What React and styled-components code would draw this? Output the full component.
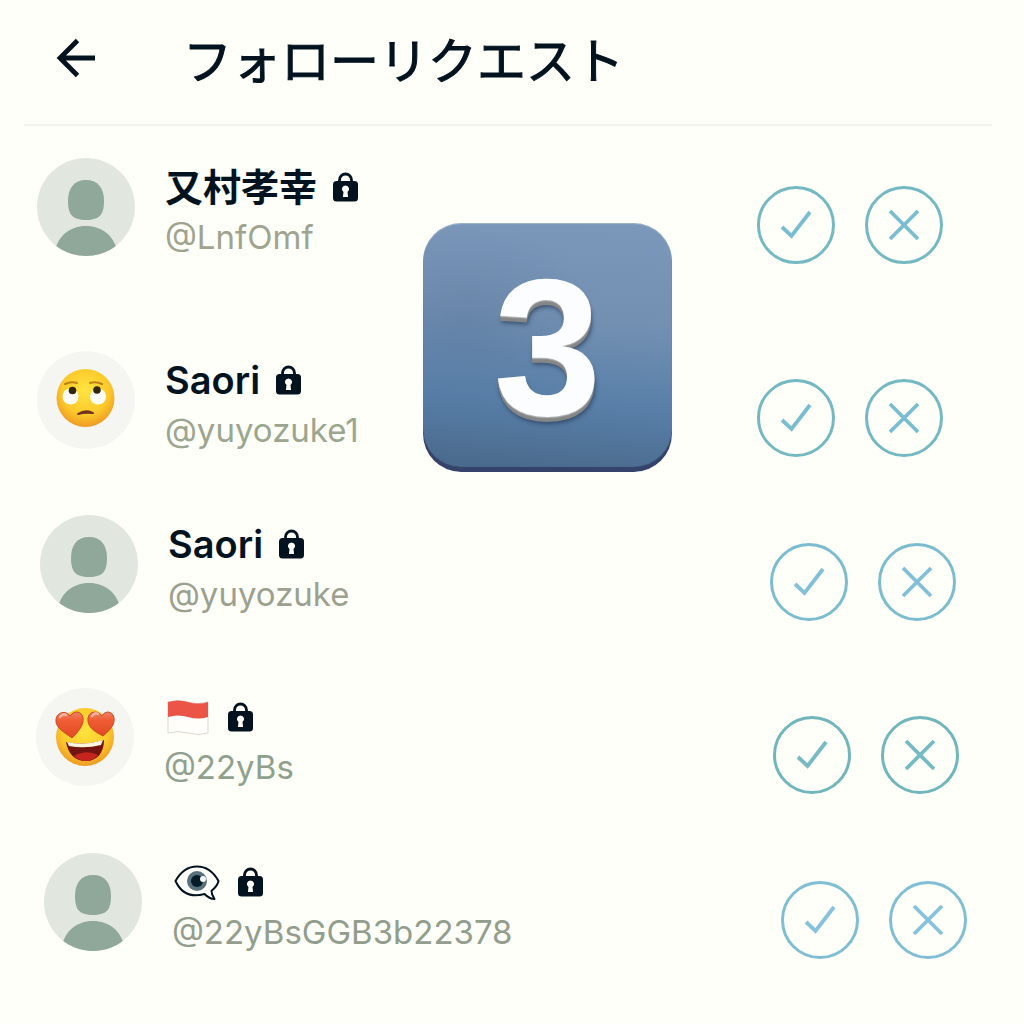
import React from 'react'
import styled, { createGlobalStyle } from 'styled-components'

const GlobalStyle = createGlobalStyle`
  * {
    box-sizing: border-box;
  }

  body {
    margin: 0;
    min-height: 100vh;
    background: #fefff8;
    color: #02131f;
    font-family: "Inter", "Noto Sans CJK JP", sans-serif;
  }
`;

const Page = styled.main`
  position: relative;
`;

const Header = styled.header`
  display: flex;
  align-items: center;
  gap: 83px;
  height: 126px;
  margin: 0 32px 0 24px;
  padding: 0 0 8px 28px;
  border-bottom: 2px solid #f1f3ee;
`;

const BackButton = styled.button`
  display: flex;
  padding: 0;
  border: 0;
  background: none;
  color: inherit;
  cursor: pointer;
`;

const Title = styled.h1`
  margin: 0;
  font-family: "Noto Sans CJK JP", sans-serif;
  font-size: 49px;
  font-weight: 400;
  line-height: 64px;
  -webkit-text-stroke: 1px currentColor;
`;

const List = styled.ul`
  margin: 0;
  padding: 32px 0 0;
  list-style: none;
`;

const Row = styled.li`
  display: flex;
  align-items: flex-start;
  gap: 30px;
  padding: 0 ${props => props.$end}px ${props => props.$space}px ${props => props.$start}px;
`;

const Avatar = styled.svg`
  flex: none;
  width: 98px;
  height: 98px;
  border-radius: 50%;
`;

const Info = styled.div`
  flex: 1;
  min-width: 0;
  padding-top: 7px;
`;

const NameLine = styled.div`
  display: flex;
  align-items: center;
  gap: 16px;
  height: 44px;
`;

const Name = styled.span`
  font-size: 38px;
  font-weight: 600;
  line-height: 44px;
`;

const Emoji = styled.span`
  display: flex;
  padding: 0 2px;
`;

const Handle = styled.a`
  display: block;
  color: ${props => props.$color};
  font-size: 33px;
  line-height: 56px;
  text-decoration: none;
`;

const Actions = styled.div`
  display: flex;
  gap: 30px;
  padding-top: 28px;
`;

const RoundButton = styled.button`
  display: flex;
  align-items: center;
  justify-content: center;
  width: 78px;
  height: 78px;
  padding: 0;
  border: 3px solid ${props => props.$color};
  border-radius: 50%;
  background: none;
  color: ${props => props.$ink};
  cursor: pointer;
`;

const Keycap = styled.div`
  position: absolute;
  top: 223px;
  left: calc(50% - 89px);
  display: flex;
  align-items: center;
  justify-content: center;
  width: 249px;
  height: 249px;
  border-radius: 38px;
  background:
    radial-gradient(ellipse at 18% 40%, rgba(70, 100, 140, 0.22), transparent 45%),
    linear-gradient(185deg, #7b98bb 0%, #7390b2 38%, #587fa8 70%, #4b6b8d 95%);
  box-shadow: inset 0 -5px 1px #35426a, inset 0 1px 1px #a2b5c9;
  color: #fbfdff;
  font-family: "Liberation Sans", sans-serif;
  font-size: 194px;
  font-weight: 700;
  line-height: 249px;
  text-shadow:
    0 1px 0 #b5b5b5,
    0 2px 0 #8f9090,
    0 4px 0 #858686,
    0 5px 0 #858686,
    1px 7px 4px rgba(35, 55, 85, 0.7);
`;

const ArrowIcon = () => (
  <svg width="48" height="48" viewBox="0 0 48 48" fill="none" stroke="currentColor" strokeWidth="4.8">
    <path d="M43 24H8M25.500 6.500L8 24l17.500 17.500" />
  </svg>
)

const LockIcon = () => (
  <svg width="25" height="30" viewBox="0 0 25 30" role="img" aria-label="非公開アカウント">
    <path d="M6.500 12V8a6 6 0 0 1 12 0v4" fill="none" stroke="#02131f" strokeWidth="2.8" />
    <rect y="9" width="25" height="20.500" rx="3.500" fill="#02131f" />
    <path d="M12.500 13.500a3.600 3.600 0 0 1 2 6.600l.6 4.900h-5.200l.6-4.900a3.600 3.600 0 0 1 2-6.600z" fill="#fefff8" />
  </svg>
)

const CheckIcon = () => (
  <svg width="36" height="36" viewBox="0 0 36 36" fill="none" stroke="currentColor" strokeWidth="3.8">
    <path d="M4 20l9.500 9L32 5" />
  </svg>
)

const CloseIcon = () => (
  <svg width="36" height="36" viewBox="0 0 36 36" fill="none" stroke="currentColor" strokeWidth="3.8">
    <path d="M4 4l28 28M32 4L4 32" />
  </svg>
)

const PersonAvatar = () => (
  <Avatar viewBox="0 0 98 98" aria-hidden="true">
    <rect width="98" height="98" fill="#e1e7de" />
    <path d="M49 22c12 0 18 8 18 21 0 13-4 19-18 19s-18-6-18-19c0-13 6-21 18-21z" fill="#8fa899" />
    <path d="M17 98c2-20 16-30 32-30s30 10 32 30z" fill="#8fa899" />
  </Avatar>
)

const FaceGradient = ({ id }) => (
  <radialGradient id={id} cx="50%" cy="38%" r="62%">
    <stop offset="0" stopColor="#ffe43f" />
    <stop offset="0.65" stopColor="#fcc92b" />
    <stop offset="1" stopColor="#ee9a24" />
  </radialGradient>
)

const RollingEyesAvatar = () => (
  <Avatar viewBox="0 0 98 98" aria-hidden="true">
    <defs><FaceGradient id="face-rolling" /></defs>
    <rect width="98" height="98" fill="#f5f5f2" />
    <circle cx="48.500" cy="47" r="29" fill="url(#face-rolling)" />
    <circle cx="33.500" cy="45.500" r="8" fill="#fffef8" />
    <circle cx="61" cy="45.500" r="8" fill="#fffef8" />
    <circle cx="35.500" cy="39.500" r="3.800" fill="#33260f" />
    <circle cx="60" cy="39" r="3.800" fill="#33260f" />
    <path d="M28 33q6-3 12-1M53 32q6-2 12 1" fill="none" stroke="#bd8119" strokeWidth="2" strokeLinecap="round" />
    <path d="M41 63q8-5 15-1-8-1-15 1z" fill="#71331c" stroke="#71331c" strokeWidth="2" strokeLinejoin="round" />
  </Avatar>
)

const HeartEyesAvatar = () => (
  <Avatar viewBox="0 0 98 98" aria-hidden="true">
    <defs>
      <FaceGradient id="face-hearts" />
      <linearGradient id="heart" x1="0" y1="0" x2="0" y2="1">
        <stop offset="0" stopColor="#ee8065" />
        <stop offset="0.35" stopColor="#f05c32" />
        <stop offset="1" stopColor="#df4a25" />
      </linearGradient>
    </defs>
    <rect width="98" height="98" fill="#f5f5f2" />
    <circle cx="49" cy="49" r="29" fill="url(#face-hearts)" />
    <path d="M30 54q19 4 38-2c0 13-7 21-18 21S32 66 30 54z" fill="#741411" />
    <path d="M38 68q12-7 24-1-5 6-12 6-7 0-12-5z" fill="#c4261e" />
    <path d="M31 54q18 4 36-2l-2 5q-16 4-32 1z" fill="#fff5df" />
    <path d="M36 50C26 43 19 39 20 31c1-7 10-9 14-3 4-6 12-5 13 2 1 7-4 13-11 20z" fill="url(#heart)" stroke="#cd4b22" />
    <path d="M67 48C57 43 51 38 52 30c1-7 10-8 14-2 3-6 11-5 12 2 1 7-4 12-11 18z" fill="url(#heart)" stroke="#cd4b22" />
    <path d="M24 29q3-4 6-2M56 28q3-4 6-2" fill="none" stroke="#f8b3a0" strokeWidth="2.500" strokeLinecap="round" />
  </Avatar>
)

const FlagEmoji = () => (
  <svg width="44" height="36" viewBox="0 0 44 36" role="img" aria-label="インドネシア国旗">
    <path d="M2 3q10-3 20 0t20 0v31q-10 3-20 0t-20 0z" fill="#fffefa" stroke="#d9d9d1" />
    <path d="M2 3q10-3 20 0t20 0v15q-10 3-20 0t-20 0z" fill="#ea5547" />
  </svg>
)

const EyeEmoji = () => (
  <svg width="46" height="38" viewBox="0 0 46 38" role="img" aria-label="吹き出しの目">
    <path d="M1.500 18C7 8 14 3.500 23 3.500S39 8 44.500 18c-1 5-4 7-7 10 0 3 1 5 3 8-4 0-7-2-10-5C16 35 7 30 1.500 18z" fill="#fffffc" stroke="#02131f" strokeWidth="2" strokeLinejoin="round" />
    <circle cx="23" cy="18" r="10" fill="#58717d" />
    <circle cx="23" cy="18" r="6" fill="#061a2a" />
    <circle cx="29" cy="16" r="3" fill="#f3f8f8" />
  </svg>
)

const requests = [
  {
    name: '又村孝幸',
    handle: '@LnfOmf',
    avatar: <PersonAvatar />,
    start: 37,
    end: 81,
    space: 86,
    text: '#a0a38e',
    ring: '#74b9c2',
    ink: '#79bdd0',
  },
  {
    name: 'Saori',
    handle: '@yuyozuke1',
    avatar: <RollingEyesAvatar />,
    start: 37,
    end: 81,
    space: 57,
    text: '#9ca58f',
    ring: '#74b9c2',
    ink: '#79bdd0',
  },
  {
    name: 'Saori',
    handle: '@yuyozuke',
    avatar: <PersonAvatar />,
    start: 40,
    end: 68,
    space: 66,
    text: '#9ca08f',
    ring: '#7bbdcf',
    ink: '#82bfd8',
  },
  {
    emoji: <FlagEmoji />,
    handle: '@22yBs',
    avatar: <HeartEyesAvatar />,
    start: 36,
    end: 65,
    space: 58,
    text: '#8fa18d',
    ring: '#70b6bb',
    ink: '#76bac4',
  },
  {
    emoji: <EyeEmoji />,
    handle: '@22yBsGGB3b22378',
    avatar: <PersonAvatar />,
    start: 44,
    end: 57,
    space: 57,
    text: '#929d8d',
    ring: '#80bfd3',
    ink: '#87c2dc',
  },
]

const Request = ({ name, emoji, handle, avatar, start, end, space, text, ring, ink }) => (
  <Row $start={start} $end={end} $space={space}>
    {avatar}
    <Info>
      <NameLine>
        {name ? <Name>{name}</Name> : <Emoji>{emoji}</Emoji>}
        <LockIcon />
      </NameLine>
      <Handle href={`#${handle}`} $color={text}>{handle}</Handle>
    </Info>
    <Actions>
      <RoundButton type="button" aria-label={`${handle} を承認`} $color={ring} $ink={ink}>
        <CheckIcon />
      </RoundButton>
      <RoundButton type="button" aria-label={`${handle} を拒否`} $color={ring} $ink={ink}>
        <CloseIcon />
      </RoundButton>
    </Actions>
  </Row>
)

export default function App() {
  return (
    <>
      <GlobalStyle />
      <Page lang="ja">
        <Header>
          <BackButton type="button" aria-label="戻る">
            <ArrowIcon />
          </BackButton>
          <Title>フォローリクエスト</Title>
        </Header>
        <List>
          {requests.map(request => (
            <Request key={request.handle} {...request} />
          ))}
        </List>
        <Keycap>3</Keycap>
      </Page>
    </>
  );
}
